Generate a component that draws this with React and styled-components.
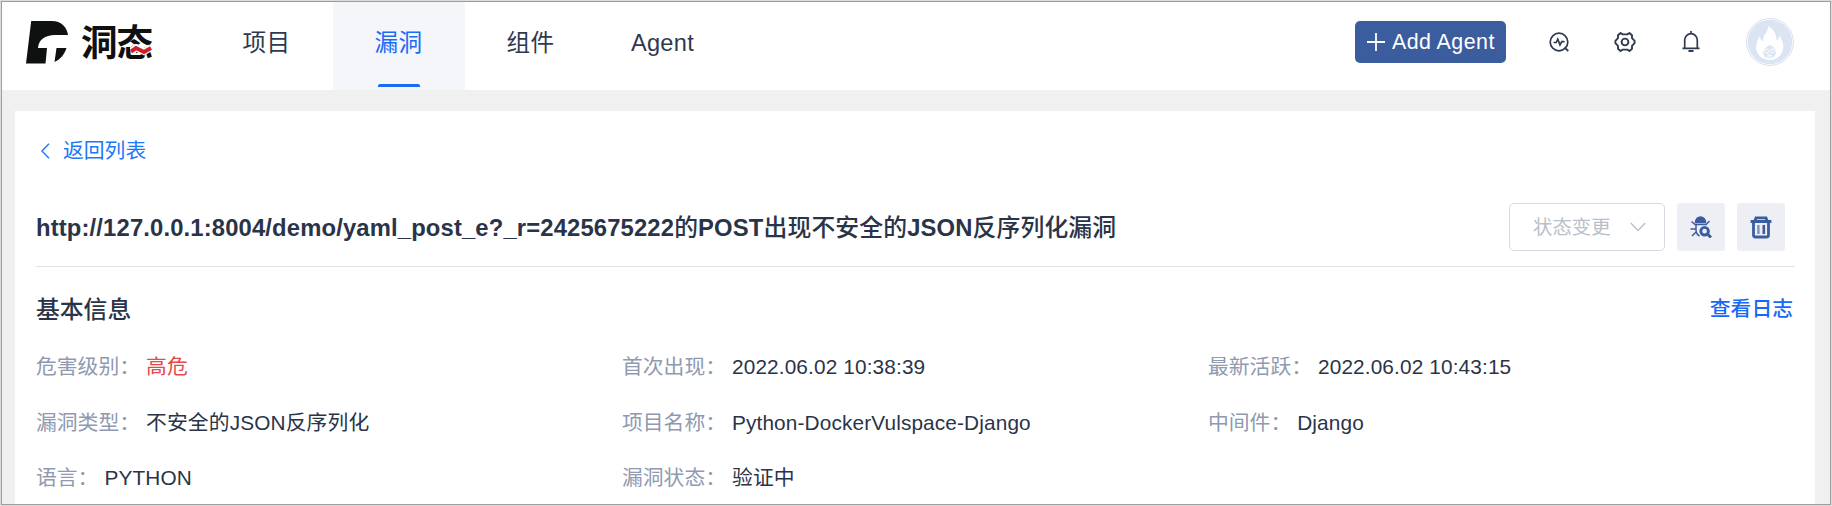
import React from "react";
import styled, { createGlobalStyle } from "styled-components";

const Global = createGlobalStyle`
  * { box-sizing: border-box; }
  body {
    margin: 0;
    font-family: "Liberation Sans", "Noto Sans CJK SC", sans-serif;
    color: #2a3449;
  }
`;

const Frame = styled.div`
  padding: 1px;
  background: #dcdcdc;
  width: 1832px;
  height: 506px;
  overflow: hidden;
`;

const Window = styled.div`
  width: 1830px;
  height: 504px;
  display: flex;
  flex-direction: column;
  overflow: hidden;
  background: #f0f0f0;
  border: 1px solid #9e9e9e;
`;

const Header = styled.header`
  height: 88px;
  flex: none;
  display: flex;
  align-items: stretch;
  background: #fff;
`;

const Brand = styled.div`
  width: 199px;
  display: flex;
  padding: 18px 0 0 23px;
  gap: 12px;
`;

const Wordmark = styled.div`
  position: relative;
  height: 42px;
  display: flex;
  font: 700 36.5px/41px "Noto Sans CJK SC", sans-serif;
  letter-spacing: -1px;
  color: #0e1110;

  svg {
    position: absolute;
    left: 49px;
    top: 24px;
  }
`;

const Nav = styled.nav`
  display: flex;
`;

const NavItem = styled.a`
  width: 132px;
  display: flex;
  flex-direction: column;
  justify-content: space-between;
  align-items: center;
  padding: 23px 0 3px;
  font-size: 23.6px;
  line-height: 36px;
  letter-spacing: 0.3px;
  color: ${(p) => (p.$active ? "#1c6bf5" : "#2f3950")};
  background: ${(p) => (p.$active ? "#f4f6fa" : "transparent")};

  span { margin-right: 1px; }

  &::after {
    content: "";
    width: 42px;
    height: 3px;
    border-radius: 2px 2px 0 0;
    background: ${(p) => (p.$active ? "#1a6cf5" : "transparent")};
  }
`;

const Tools = styled.div`
  margin-left: auto;
  display: flex;
  align-items: center;
  height: 80px;
  padding-right: 36px;
`;

const AddButton = styled.button`
  width: 151px;
  height: 42px;
  display: flex;
  align-items: center;
  gap: 7px;
  padding: 0 0 0 12px;
  margin-right: 41px;
  border: 0;
  border-radius: 5px;
  background: #3b5d9e;
  color: #fff;
  font: 21.4px/42px "Liberation Sans", sans-serif;
  letter-spacing: 0.45px;
  white-space: nowrap;
`;

const ToolIcon = styled.span`
  width: 24px;
  height: 24px;
  margin-right: 42px;
  display: flex;
  align-items: center;
  justify-content: center;
  color: #2f3950;

  &:last-of-type { margin-right: 43px; }
`;

const Card = styled.main`
  width: 1800px;
  flex: 1;
  margin: 21px 0 0 13px;
  padding: 0 20px 0 21px;
  background: #fff;
`;

const Back = styled.a`
  display: flex;
  align-items: center;
  gap: 13px;
  padding: 26px 0 0 5px;
  height: 54px;
  font-size: 20.8px;
  line-height: 28px;
  color: #1c78f7;
`;

const TitleRow = styled.div`
  height: 102px;
  padding: 38px 10px 0 0;
  display: flex;
  align-items: flex-start;
  border-bottom: 1px solid #e0e2e9;
`;

const Title = styled.h1`
  flex: 1;
  margin: 0;
  font-size: 23.8px;
  line-height: 49px;
  font-weight: 700;
  letter-spacing: 0.15px;
  white-space: nowrap;
`;

const Han = styled.span`
  font-weight: 500;
`;

const StatusSelect = styled.div`
  width: 156px;
  height: 48px;
  display: flex;
  align-items: center;
  justify-content: space-between;
  padding: 0 18px 0 23px;
  margin-right: 12px;
  border: 1px solid #d6d9e3;
  border-radius: 5px;
  color: #b9bfca;
  font-size: 19.4px;
  line-height: 44px;
`;

const SquareButton = styled.button`
  width: 48px;
  height: 48px;
  padding: 0;
  display: flex;
  align-items: center;
  justify-content: center;
  border: 0;
  border-radius: 3px;
  background: #eeeff4;
  color: #3b5d9e;

  & + & { margin-left: 12px; }
`;

const SectionHead = styled.div`
  height: 70px;
  padding-top: 26px;
  display: flex;
  justify-content: space-between;
`;

const SectionTitle = styled.h2`
  margin: 0;
  font-size: 23.8px;
  line-height: 34px;
  font-weight: 500;
`;

const LogLink = styled.a`
  font-size: 20.8px;
  line-height: 32px;
  font-weight: 500;
  margin-right: 2px;
  color: #1769f5;
`;

const InfoGrid = styled.div`
  display: grid;
  grid-template-columns: repeat(3, 586px);
  grid-auto-rows: 55.5px;
`;

const Field = styled.div`
  display: flex;
  font-size: 20.8px;
  line-height: 60px;
  white-space: nowrap;
`;

const Label = styled.span`
  color: #8f99b0;
  margin-right: 6px;
`;

const Value = styled.span`
  letter-spacing: 0.13px;
  color: ${(p) => (p.$danger ? "#e5484d" : "#2a3449")};
`;

const fields = [
  ["危害级别", "高危", true],
  ["首次出现", "2022.06.02 10:38:39"],
  ["最新活跃", "2022.06.02 10:43:15"],
  ["漏洞类型", "不安全的JSON反序列化"],
  ["项目名称", "Python-DockerVulspace-Django"],
  ["中间件", "Django"],
  ["语言", "PYTHON"],
  ["漏洞状态", "验证中"],
];

const LogoMark = () => (
  <svg width="44" height="46" viewBox="0 0 44 46">
    <path d="M6.2 1H27C36 1 42 7 43 15H30C20 15 13.5 20 13 28H22L20.5 43.5H1Z" fill="#0e1110" />
    <path d="M31.5 28H41.5C39.5 34 36 39 29.5 42Z" fill="#0e1110" />
  </svg>
);

const Wave = () => (
  <svg width="22" height="12" viewBox="0 0 22 12">
    <path d="M1 7.5L6 3.5L14 7.5L21 3.5" fill="none" stroke="#fff" strokeWidth="7" />
    <path d="M1 7.5L6 4L14 8L21 4" fill="none" stroke="#cf2028" strokeWidth="4" />
  </svg>
);

const PulseIcon = () => (
  <svg width="22" height="22" viewBox="0 0 22 22" fill="none" stroke="currentColor" strokeWidth="1.7">
    <circle cx="11" cy="11" r="8.8" />
    <path d="M16.5 16.5L20.3 20" />
    <path d="M5.5 11.5H8.2L9.8 8.2L12 14L13.8 10.6H16.6" />
  </svg>
);

const GearIcon = () => (
  <svg width="22" height="22" viewBox="0 0 22 22" fill="none" stroke="currentColor" strokeWidth="1.9" strokeLinejoin="round">
    <path d="M6.5 2L8.7 3.4H13.3L15.5 2L18 4.2L18 7.2L20.6 9.8V12.2L18 14.8L18 17.8L15.5 20L13.3 18.6H8.7L6.5 20L4 17.8L4 14.8L1.4 12.2V9.8L4 7.2L4 4.2Z" />
    <circle cx="11" cy="11" r="3.4" />
  </svg>
);

const BellIcon = () => (
  <svg width="20" height="24" viewBox="0 0 20 24" fill="none" stroke="currentColor" strokeWidth="1.7">
    <path d="M3.7 18V10A6.3 6.3 0 0 1 16.3 10V18M1.5 18.3H18.5M10 1V4" />
    <path d="M7.5 21H12.5" strokeWidth="2" />
  </svg>
);

const Avatar = () => (
  <svg width="48" height="48" viewBox="0 0 48 48">
    <circle cx="24" cy="24" r="23.4" fill="#fff" stroke="#d6deee" />
    <circle cx="24" cy="24" r="22.2" fill="#dbe4f3" />
    <path d="M22 8C30 12 30 19 31 23C33 21 33 19 33 17C37 23 38 27 37 31C36 37 31 42 24 42C16 42 11 37 10 30C10 25 12 21 14 18C14 21 15 22 17 23C17 16 23 14 22 8Z" fill="#fff" />
    <path d="M24 27Q29 29 30 34A6.5 6.5 0 0 1 17 34Q18 30 24 27Z" fill="#dbe4f3" />
    <g fill="none" stroke="#fff" strokeWidth="1">
      <circle cx="20.5" cy="33" r="2" />
      <circle cx="26.5" cy="33" r="2" />
      <path d="M22 41V37H25V41" />
    </g>
  </svg>
);

const BugIcon = () => (
  <svg width="22" height="22" viewBox="0 0 22 22" fill="none" stroke="currentColor" strokeWidth="1.5">
    <path d="M5.5 6.5A5 5.5 0 0 1 15.5 6.5Z" fill="currentColor" />
    <path d="M6 8V14Q6 18 9.5 20M5 8.5H17M5.5 9L1.5 5.5M5.5 13H.5M6 16L2 20M16 8.5L19.5 5" />
    <circle cx="14.6" cy="15.2" r="3.8" strokeWidth="2.9" />
    <path d="M17.5 18L21 21.5" strokeWidth="3" />
  </svg>
);

const TrashIcon = () => (
  <svg width="22" height="24" viewBox="0 0 22 24" fill="none" stroke="currentColor" strokeWidth="2.8">
    <path d="M.6 6.5H21.4M4.8 6L6 2.9H16L17.2 6M3.5 6V20Q3.5 22 5.5 22H16.5Q18.5 22 18.5 20V6" />
    <path d="M8.4 10V19" strokeWidth="2.4" opacity=".65" />
    <path d="M13.8 10V19" strokeWidth="2.6" />
  </svg>
);

export default function App() {
  return (
    <Frame>
      <Global />
      <Window>
        <Header>
          <Brand>
            <LogoMark />
            <Wordmark>洞态<Wave /></Wordmark>
          </Brand>
          <Nav>
            <NavItem><span>项目</span></NavItem>
            <NavItem $active><span>漏洞</span></NavItem>
            <NavItem><span>组件</span></NavItem>
            <NavItem><span>Agent</span></NavItem>
          </Nav>
          <Tools>
            <AddButton>
              <svg width="18" height="18" viewBox="0 0 18 18" stroke="#fff" strokeWidth="1.8"><path d="M9 0V18M0 9H18" /></svg>
              Add Agent
            </AddButton>
            <ToolIcon><PulseIcon /></ToolIcon>
            <ToolIcon><GearIcon /></ToolIcon>
            <ToolIcon><BellIcon /></ToolIcon>
            <Avatar />
          </Tools>
        </Header>
        <Card>
          <Back>
            <svg width="9" height="16" viewBox="0 0 9 16" fill="none" stroke="currentColor" strokeWidth="1.4"><path d="M8 .8L1 8L8 15.2" /></svg>
            返回列表
          </Back>
          <TitleRow>
            <Title>
              http://127.0.0.1:8004/demo/yaml_post_e?_r=2425675222<Han>的</Han>POST<Han>出现不安全的</Han>JSON<Han>反序列化漏洞</Han>
            </Title>
            <StatusSelect>
              <span>状态变更</span>
              <svg width="16" height="10" viewBox="0 0 16 10" fill="none" stroke="currentColor" strokeWidth="1.3"><path d="M.8 1L8 8.5L15.2 1" /></svg>
            </StatusSelect>
            <SquareButton><BugIcon /></SquareButton>
            <SquareButton><TrashIcon /></SquareButton>
          </TitleRow>
          <SectionHead>
            <SectionTitle>基本信息</SectionTitle>
            <LogLink>查看日志</LogLink>
          </SectionHead>
          <InfoGrid>
            {fields.map(([label, value, danger]) => (
              <Field key={label}>
                <Label>{label}：</Label>
                <Value $danger={danger}>{value}</Value>
              </Field>
            ))}
          </InfoGrid>
        </Card>
      </Window>
    </Frame>
  );
}
